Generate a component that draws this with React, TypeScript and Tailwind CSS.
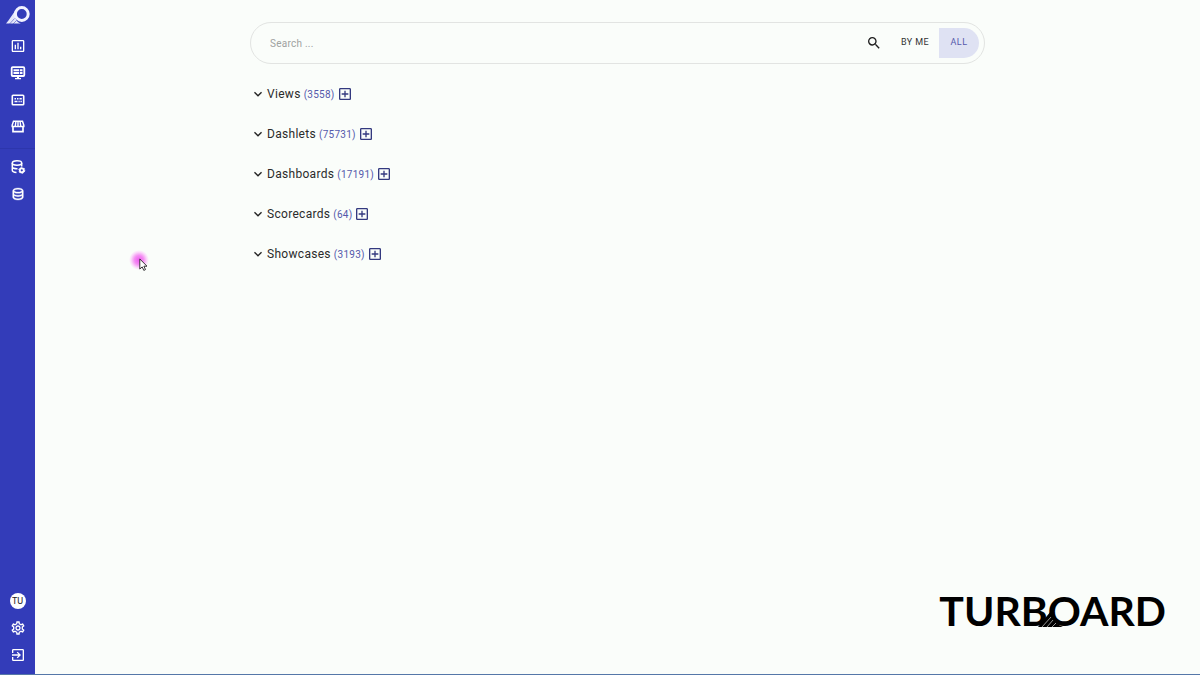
import type { ReactNode } from 'react';
import {
  MdExitToApp,
  MdInsertChartOutlined,
  MdKeyboardArrowDown,
  MdOutlineAddBox,
  MdOutlineSettings,
  MdSearch,
} from 'react-icons/md';

type Category = {
  name: string;
  count: number;
};

const categories: Category[] = [
  { name: 'Views', count: 3558 },
  { name: 'Dashlets', count: 75731 },
  { name: 'Dashboards', count: 17191 },
  { name: 'Scorecards', count: 64 },
  { name: 'Showcases', count: 3193 },
];

function TurboardMark() {
  return (
    <svg viewBox="0 0 24 18" className="w-6 h-[18px]" fill="none">
      <path d="M9 5C6 9 3 14 0 17.500H15C11 16.500 8.500 13.500 9 5Z" fill="#e4e6fa" />
      <circle cx="15.800" cy="8" r="6.400" fill="#333cb9" stroke="#f1f2ff" strokeWidth="3" />
      <path d="M3.500 18L8.500 12.500M7 18L10.500 14.500" stroke="#333cb9" strokeWidth=".5" />
    </svg>
  );
}

function MonitorIcon() {
  return (
    <svg viewBox="0 0 16 14" className="w-4 h-3.5" fill="none">
      <rect x="1.700" y="1.200" width="12.600" height="8.800" rx="1" stroke="white" strokeWidth="1.800" />
      <path d="M3.500 3.300H9V5.200H3.500zM3.500 6H9V8H3.500zM9.800 3.300H12.500V5.200H9.800zM9.800 6H12.500V8H9.800z" fill="white" />
      <path d="M7 10H9V12H11V13.300H5V12H7z" fill="white" />
    </svg>
  );
}

function CardIcon() {
  return (
    <svg viewBox="0 0 14 12" className="w-3.5 h-3" fill="none">
      <rect x="1.300" y="1.300" width="11.400" height="9.400" rx=".8" stroke="white" strokeWidth="1.600" />
      <path d="M3.500 4H5V5.500H3.500zM6 4H7.500V5.500H6zM8.500 4H10.800V5.500H8.500zM3.500 6.700H6.500V8.200H3.500zM7.500 6.700H8.700V8.200H7.500zM9.500 6.700H10.800V8.200H9.500z" fill="white" />
    </svg>
  );
}

function StoreIcon() {
  return (
    <svg viewBox="0 0 14 13" className="w-3.5 h-[13px]" fill="none">
      <path d="M2.500 1.200H11.500L12.800 5V6.500H1.200V5Z" stroke="white" strokeWidth="1.500" />
      <path d="M4.900 1.500L4.300 6M7 1.500V6M9.100 1.500L9.700 6" stroke="white" strokeWidth="1.400" />
      <path d="M2 6.500V11.700H12V6.500" stroke="white" strokeWidth="1.700" />
    </svg>
  );
}

function DatabaseIcon() {
  return (
    <svg viewBox="0 0 24 24" className="size-4" fill="white" stroke="white" strokeWidth=".5">
      <path d="M12 3C7.580 3 4 4.790 4 7V17C4 19.210 7.590 21 12 21S20 19.210 20 17V7C20 4.790 16.420 3 12 3M18 17C18 17.500 15.870 19 12 19S6 17.500 6 17V14.770C7.610 15.550 9.720 16 12 16S16.390 15.550 18 14.770V17M18 12.450C16.700 13.400 14.420 14 12 14C9.580 14 7.300 13.400 6 12.450V9.640C7.470 10.470 9.610 11 12 11C14.390 11 16.530 10.470 18 9.640V12.450M12 9C8.130 9 6 7.500 6 7S8.130 5 12 5C15.870 5 18 6.500 18 7S15.870 9 12 9Z" />
    </svg>
  );
}

function DatabaseCogIcon() {
  return (
    <svg viewBox="0 0 16 16" className="size-4" fill="none">
      <ellipse cx="7" cy="4" rx="4.700" ry="2.200" stroke="white" strokeWidth="1.500" />
      <path d="M2.300 4V11.300C2.300 12.500 4 13.400 6.500 13.500M2.300 7.700C2.300 9 4.500 9.800 7.500 9.700M11.700 4V7.400" stroke="white" strokeWidth="1.500" />
      <circle cx="11.800" cy="11.300" r="2" stroke="white" strokeWidth="1.800" />
      <circle cx="11.800" cy="11.300" r="3" stroke="white" strokeWidth="1" strokeDasharray="1.600 1.540" />
    </svg>
  );
}

function NavButton({ label, children }: { label: string; children: ReactNode }) {
  return (
    <button aria-label={label} className="flex items-center justify-center w-full h-[27px] text-white">
      {children}
    </button>
  );
}

function Sidebar() {
  return (
    <nav className="flex flex-col w-[35px] shrink-0 bg-[#333cb9]">
      <a href="#home" aria-label="Home" className="flex justify-center pt-1.5 pb-2">
        <TurboardMark />
      </a>
      <div className="flex flex-col pb-2 border-b border-[#2d36ac]">
        <NavButton label="Views"><MdInsertChartOutlined size={16} /></NavButton>
        <NavButton label="Dashboards"><MonitorIcon /></NavButton>
        <NavButton label="Scorecards"><CardIcon /></NavButton>
        <NavButton label="Showcases"><StoreIcon /></NavButton>
      </div>
      <div className="flex flex-col pt-1">
        <NavButton label="Data models"><DatabaseCogIcon /></NavButton>
        <NavButton label="Data sources"><DatabaseIcon /></NavButton>
      </div>
      <div className="flex flex-col mt-auto pb-1.5">
        <button aria-label="Account TU" className="flex items-center justify-center w-full h-[27px]">
          <span className="flex items-center justify-center size-4 rounded-full bg-white text-[9px] leading-4 text-[#222]">TU</span>
        </button>
        <NavButton label="Settings"><MdOutlineSettings size={16} /></NavButton>
        <NavButton label="Log out"><MdExitToApp size={16} /></NavButton>
      </div>
    </nav>
  );
}

function SearchBar() {
  return (
    <form className="flex items-center h-[42px] pl-[19px] pr-[5px] rounded-full border border-[#e2e4e2]">
      <input
        type="text"
        aria-label="Search"
        placeholder="Search ..."
        className="flex-1 min-w-0 text-[10px] tracking-wide text-[#222] placeholder:text-[#9fa2a0] bg-transparent outline-none"
      />
      <button type="button" aria-label="Run search" className="flex items-center justify-center w-8 h-7 text-[#1d1d1d]">
        <MdSearch size={16} />
      </button>
      <button type="button" className="h-[30px] w-12 ml-px text-[9px] tracking-wider text-[#333]">BY ME</button>
      <button type="button" className="h-[30px] w-10 rounded-r-full bg-[#dfe2f3] text-[9px] tracking-wider text-[#5459ab]">ALL</button>
    </form>
  );
}

function CategoryRow({ name, count }: Category) {
  return (
    <li className="flex items-center h-10">
      <button aria-label={`Expand ${name}`} className="flex items-center text-[#222]">
        <MdKeyboardArrowDown size={16} />
      </button>
      <h2 className="ml-px text-[12px] tracking-wide text-[#2b2b2b]">{name}</h2>
      <span className="ml-[3px] text-[10px] tracking-wide text-[#5459ab]">({count})</span>
      <button aria-label={`Add to ${name}`} className="ml-0.5 text-[#33397f]">
        <MdOutlineAddBox size={16} />
      </button>
    </li>
  );
}

function Wordmark() {
  return (
    <div className="absolute right-[34px] bottom-[43px] font-['Lato',sans-serif] text-[41px] leading-10 font-bold text-black select-none">
      TURBOARD
      <svg viewBox="0 0 30 18" className="absolute left-[99px] bottom-1 w-[30px] h-[18px]" fill="none">
        <path d="M0 18L13 2C13 10 17 15 25 18Z" fill="black" />
        <path d="M4 18L13 8M9 18L15 11M14 18L18 14" stroke="#f9fcf9" strokeWidth=".6" />
      </svg>
    </div>
  );
}

function Pointer() {
  return (
    <div className="absolute left-[129px] top-[250px] size-5 pointer-events-none">
      <div className="size-5 rounded-full bg-[radial-gradient(closest-side,#ef5af0_0%,#f48df3_45%,#fbdcfa_80%,transparent_100%)]" />
      <svg viewBox="0 0 10 14" className="absolute left-2.5 top-2 w-2.5 h-3.5">
        <path d="M.8 1V11L3.200 8.900L4.800 12.400L6.500 11.600L4.900 8.200H8Z" fill="white" stroke="#222" strokeWidth=".9" />
      </svg>
    </div>
  );
}

export default function App() {
  return (
    <div className="relative flex min-h-screen bg-[#fafdfa] border-b border-[#5577a8] font-['Roboto',sans-serif]">
      <Sidebar />
      <main className="flex-1 min-w-0 pt-[22px]">
        <div className="w-full max-w-[735px] mx-auto">
          <SearchBar />
          <ul className="pt-[10px]">
            {categories.map(c => <CategoryRow key={c.name} name={c.name} count={c.count} />)}
          </ul>
        </div>
      </main>
      <Wordmark />
      <Pointer />
    </div>
  );
}
